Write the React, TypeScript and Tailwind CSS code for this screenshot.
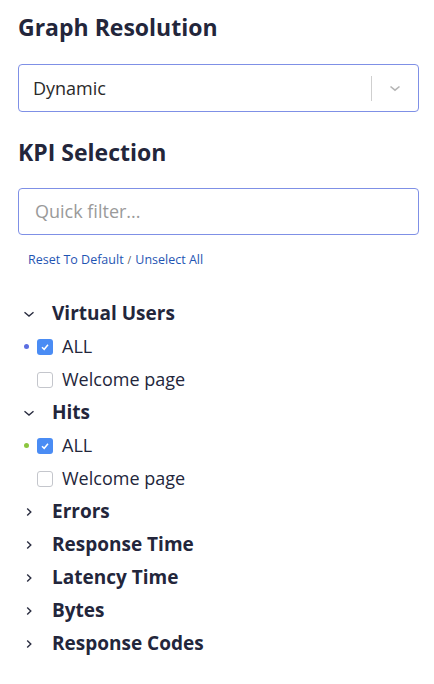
import React from "react";

type Item = { label: string; checked: boolean; dot?: string };
type Group = { name: string; open: boolean; items: Item[] };

const groups: Group[] = [
  {
    name: "Virtual Users",
    open: true,
    items: [
      { label: "ALL", checked: true, dot: "#5b6ee1" },
      { label: "Welcome page", checked: false },
    ],
  },
  {
    name: "Hits",
    open: true,
    items: [
      { label: "ALL", checked: true, dot: "#8cc63f" },
      { label: "Welcome page", checked: false },
    ],
  },
  { name: "Errors", open: false, items: [] },
  { name: "Response Time", open: false, items: [] },
  { name: "Latency Time", open: false, items: [] },
  { name: "Bytes", open: false, items: [] },
  { name: "Response Codes", open: false, items: [] },
];

const Chevron = ({ open }: { open: boolean }) => (
  <svg width="12" height="12" viewBox="0 0 12 12" className="text-[#2a2d40]">
    {open ? (
      <path d="M1.5 4.2 L6 8 L10.5 4.2" fill="none" stroke="currentColor" strokeWidth="1.4" />
    ) : (
      <path d="M4.2 2.5 L7.8 6 L4.2 9.5" fill="none" stroke="currentColor" strokeWidth="1.4" />
    )}
  </svg>
);

const Checkbox = ({ checked }: { checked: boolean }) =>
  checked ? (
    <div className="w-4 h-4 rounded-[3px] bg-[#4a8cf4] flex items-center justify-center">
      <svg width="10" height="10" viewBox="0 0 10 10">
        <path d="M2 5.2 L4.2 7.3 L8 2.8" fill="none" stroke="white" strokeWidth="1.5" />
      </svg>
    </div>
  ) : (
    <div className="w-4 h-4 rounded-[3px] border border-[#c4c6cc] bg-white" />
  );

export default function App() {
  return (
    <div
      className="w-[434px] h-[684px] bg-white px-[18px] pt-3 text-[#23263b]"
      style={{ fontFamily: '"Open Sans", "Noto Sans", sans-serif' }}
    >
      <h2 className="text-[23px] leading-[30px] font-bold">Graph Resolution</h2>

      <div className="mt-[22px] h-12 w-[401px] border border-[#7f90e6] rounded-[4px] flex items-center">
        <span className="flex-1 pl-[14px] text-[18px] text-[#2a2a2a]">Dynamic</span>
        <div className="w-px h-[25px] bg-[#cfcfcf]" />
        <div className="w-[46px] flex items-center justify-center">
          <svg width="14" height="14" viewBox="0 0 14 14">
            <path d="M2.5 5.5 L7 9.2 L11.5 5.5" fill="none" stroke="#b5b5b5" strokeWidth="1.6" />
          </svg>
        </div>
      </div>

      <h2 className="mt-[25px] text-[23px] leading-[30px] font-bold">KPI Selection</h2>

      <div className="mt-[21px] h-[47px] w-[401px] border border-[#7f90e6] rounded-[4px] flex items-center">
        <span className="pl-4 text-[18px] text-[#9a9a9a]">Quick filter...</span>
      </div>

      <div className="mt-[17px] pl-[10px] text-[12.5px] leading-4 text-[#1f55b3] flex items-center gap-1">
        <span>Reset To Default</span>
        <span className="text-[#555] text-[10px]">/</span>
        <span>Unselect All</span>
      </div>

      <div className="mt-[29px]">
        {groups.map((g) => (
          <div key={g.name}>
            <div className="h-[33px] flex items-center">
              <div className="w-[34px] pl-[5px] flex items-center">
                <Chevron open={g.open} />
              </div>
              <span className="text-[19px] font-bold text-[#23263b]">{g.name}</span>
            </div>
            {g.open &&
              g.items.map((it, i) => (
                <div key={i} className="h-[33px] flex items-center">
                  <div className="w-[19px] flex items-center pl-[6px]">
                    {it.dot && (
                      <div className="w-[5px] h-[5px] rounded-full" style={{ backgroundColor: it.dot }} />
                    )}
                  </div>
                  <Checkbox checked={it.checked} />
                  <span className="ml-[9px] text-[18px] text-[#23263b]">{it.label}</span>
                </div>
              ))}
          </div>
        ))}
      </div>
    </div>
  );
}
